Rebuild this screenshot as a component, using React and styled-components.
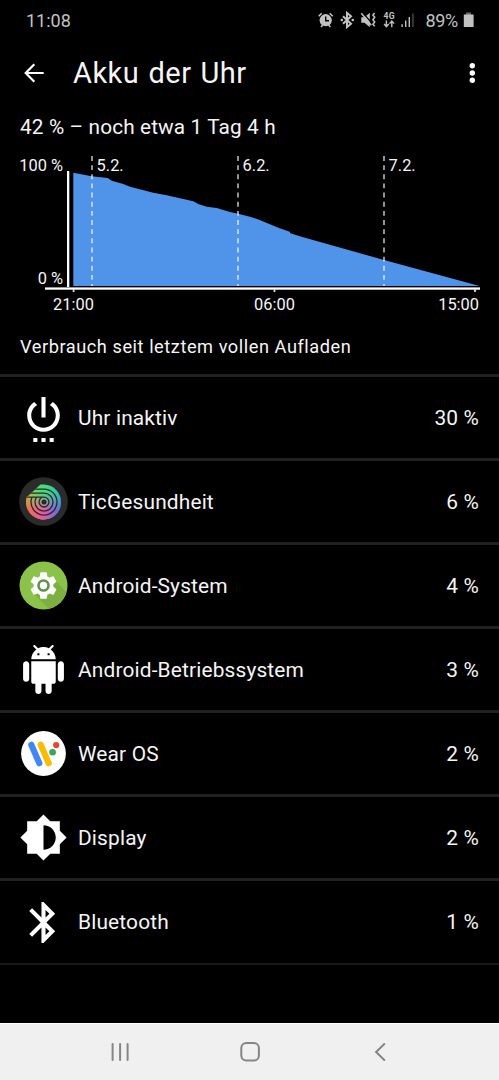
import React from 'react';
import styled, { createGlobalStyle } from 'styled-components';

const GlobalStyle = createGlobalStyle`
  * {
    box-sizing: border-box;
  }

  body {
    margin: 0;
    background: #000;
    font-family: Roboto, sans-serif;
  }
`;

const Screen = styled.div`
  width: 499px;
  height: 1080px;
  margin: 0 auto;
  display: flex;
  flex-direction: column;
  background: #000;
  color: #f5f5f5;
  overflow: hidden;
`;

const StatusBar = styled.div`
  height: 40px;
  padding: 0 24px 0 26px;
  display: flex;
  align-items: center;
  justify-content: space-between;
  color: #c2c2c2;
  font-size: 18px;
`;

const StatusIcons = styled.div`
  display: flex;
  align-items: center;

  svg {
    display: block;
  }
`;

const Percent = styled.span`
  margin-left: 10px;
  margin-right: 5px;
  letter-spacing: -0.3px;
`;

const Header = styled.header`
  height: 66px;
  padding: 0 15px 0 22px;
  display: flex;
  align-items: center;

  svg {
    display: block;
  }
`;

const Title = styled.h1`
  flex: 1;
  margin: 0 0 0 27px;
  font-size: 29px;
  font-weight: 400;
  letter-spacing: 0.5px;
  word-spacing: 1.4px;
`;

const Summary = styled.div`
  height: 42px;
  padding: 0 20px;
  line-height: 42px;
  font-size: 20.8px;
  letter-spacing: 0.12px;
`;

const Chart = styled.svg`
  display: block;
  flex: none;

  text {
    fill: #f5f5f5;
    font-size: 16.4px;
  }
`;

const Caption = styled.div`
  height: 58px;
  padding: 0 20px;
  line-height: 61px;
  font-size: 18.2px;
  letter-spacing: 0.55px;
`;

const List = styled.div`
  border-top: 3px solid #212121;
`;

const Row = styled.div`
  height: 84px;
  padding: 0 20px 0 19px;
  display: flex;
  align-items: center;
  border-bottom: 3px solid #212121;
  font-size: 20.9px;
  letter-spacing: 0.15px;

  &:last-child {
    border-bottom: 2px solid #181818;
  }
`;

const RowIcon = styled.svg`
  display: block;
  width: 49px;
  height: 49px;
  margin-right: 10px;
  fill: #fff;
`;

const RowName = styled.span`
  flex: 1;
`;

const NavBar = styled.nav`
  height: 57px;
  margin-top: auto;
  border-top: 1px solid #fff;
  background: #f0f0f0;

  svg {
    display: block;
  }
`;

const levels = [
  [73.3, 172.7], [91.7, 176.3], [107.7, 178], [111.7, 180.7], [123.3, 184],
  [130, 186.7], [153.3, 192.7], [166.7, 195.3], [193.3, 201.3], [198.3, 204],
  [206.7, 206.7], [216.7, 208], [230, 212], [238, 213.7], [250, 216.7],
  [259, 219.7], [279, 228], [289.7, 231.7], [290.3, 233.3], [302.3, 237],
  [384, 260], [479.5, 286],
];

const days = [
  { x: 92, label: '5.2.' },
  { x: 238, label: '6.2.' },
  { x: 384, label: '7.2.' },
];

function BatteryChart() {
  const area = levels.map(p => p.join(',')).join(' ');
  return (
    <Chart width="499" height="168" viewBox="0 148 499 168">
      <polygon points={`${area} 73.3,286`} fill="#5094ea" />
      {days.map(day => (
        <g key={day.label}>
          <line x1={day.x} x2={day.x} y1="156" y2="286" stroke="#fff" strokeOpacity="0.72" strokeWidth="1.6" strokeDasharray="4.9 4.25" />
          <text x={day.x + 4.6} y="171">{day.label}</text>
        </g>
      ))}
      <rect x="67" y="171" width="2.3" height="116" fill="#fff" />
      <rect x="45" y="287.4" width="435" height="2.3" fill="#fff" />
      <path d="M73.6 289v3M274.5 289v3M475 289v3" stroke="#ddd" strokeWidth="1.8" />
      <text x="63" y="171" textAnchor="end">100 %</text>
      <text x="63" y="284" textAnchor="end">0 %</text>
      <text x="73.5" y="310" textAnchor="middle">21:00</text>
      <text x="274.5" y="310" textAnchor="middle">06:00</text>
      <text x="479" y="310" textAnchor="end">15:00</text>
    </Chart>
  );
}

function StatusGlyphs() {
  return (
    <svg width="98" height="24" viewBox="318 8 98 24" fill="#c2c2c2">
      {/* alarm */}
      <circle cx="326.7" cy="20.2" r="6.1" />
      <path d="M326.7 16.5v4.3h3.3" fill="none" stroke="#000" strokeWidth="1.4" />
      <path d="M319.7 16.2l3-3M333.7 16.2l-3-3M322 27l1.8-2M331.4 27l-1.8-2" fill="none" stroke="#c2c2c2" strokeWidth="1.6" />
      {/* bluetooth connected */}
      <path d="M344 16.2l8 7.6-4 3.4V12.8l4 3.4-8 7.6" fill="none" stroke="#c2c2c2" strokeWidth="2" />
      <circle cx="342.8" cy="20" r="1.3" />
      <circle cx="353.8" cy="20" r="1.3" />
      {/* muted, vibrating speaker */}
      <path d="M362.3 17.3h3.2l5.3-4.5v14.4l-5.3-4.5h-3.2z" />
      <path d="M363.6 12.6l9.5 10.8" stroke="#000" strokeWidth="1.4" />
      <path d="M362.3 13.2l10 12" stroke="#c2c2c2" strokeWidth="1.5" />
      <path d="M375.7 13l-1.8 2 1.8 2.3-1.8 2.4 1.8 2.3-1.8 2.3 1.8 2" fill="none" stroke="#c2c2c2" strokeWidth="1.5" />
      {/* mobile data */}
      <text x="384.5" y="19" fontSize="8.6" fontWeight="700" textLength="11">4G</text>
      <path d="M387.4 20.5v6M385.1 24l2.3 2.6 2.3-2.6M392.8 27.2v-6M390.5 23.6l2.3-2.6 2.3 2.6" fill="none" stroke="#c2c2c2" strokeWidth="1.4" />
      {/* signal */}
      <path d="M402.4 24.3h1.4v2.7h-1.4zM406 20.6h1.4V27H406zM409.6 17h1.4v10h-1.4z" />
      <path d="M413.2 13.4h1.4V27h-1.4z" fill="#4a4a4a" />
    </svg>
  );
}

const gear = 'M19.43 12.98c.04-.32.07-.64.07-.98s-.03-.66-.07-.98l2.11-1.65c.19-.15.24-.42.12-.64l-2-3.46c-.12-.22-.39-.3-.61-.22l-2.49 1c-.52-.4-1.08-.73-1.69-.98l-.38-2.65C14.46 2.18 14.25 2 14 2h-4c-.25 0-.46.18-.49.42l-.38 2.65c-.61.25-1.17.59-1.69.98l-2.49-1c-.23-.09-.49 0-.61.22l-2 3.46c-.13.22-.07.49.12.64l2.11 1.65c-.04.32-.07.65-.07.98s.03.66.07.98l-2.11 1.65c-.19.15-.24.42-.12.64l2 3.46c.12.22.39.3.61.22l2.49-1c.52.4 1.08.73 1.69.98l.38 2.65c.03.24.24.42.49.42h4c.25 0 .46-.18.49-.42l.38-2.65c.61-.25 1.17-.59 1.69-.98l2.49 1c.23.09.49 0 .61-.22l2-3.46c.12-.22.07-.49-.12-.64l-2.11-1.65z';

function HealthIcon() {
  return (
    <RowIcon viewBox="0 0 49 49">
      <defs>
        <linearGradient id="ringTop" x1="0" y1="0" x2="1" y2="0">
          <stop offset="0" stopColor="#b0c24a" />
          <stop offset="0.45" stopColor="#45e076" />
          <stop offset="1" stopColor="#2fc0b4" />
        </linearGradient>
        <linearGradient id="ringBottom" x1="0" y1="0" x2="1" y2="0">
          <stop offset="0" stopColor="#ff6a48" />
          <stop offset="0.5" stopColor="#e25aa4" />
          <stop offset="1" stopColor="#4470f5" />
        </linearGradient>
        <linearGradient id="ringFade" x1="0" y1="0" x2="0" y2="1">
          <stop offset="0.32" stopColor="#fff" stopOpacity="0" />
          <stop offset="0.68" stopColor="#fff" />
        </linearGradient>
        <mask id="ringMask">
          <rect width="49" height="49" fill="url(#ringFade)" />
        </mask>
        <clipPath id="ringClip">
          <path d="M21.5 7.5H25A17.5 17.5 0 1 1 7.2 22.5L7.6 20.2z" />
        </clipPath>
      </defs>
      <circle cx="24.5" cy="24.5" r="24.3" fill="#2b2b2c" />
      <g clipPath="url(#ringClip)">
        <rect x="7" y="7" width="36" height="36" fill="url(#ringTop)" />
        <g mask="url(#ringMask)">
          <rect x="7" y="7" width="36" height="36" fill="url(#ringBottom)" />
        </g>
        <g fill="none" stroke="#29292b" strokeWidth="1.3">
          <path d="M13 12.1H25A13 13 0 1 1 12 25.1Q12 22.5 13 20.2" />
          <path d="M8 16.1H25A9 9 0 1 1 16 25.1Q16 22.5 17.5 20.2" />
          <path d="M6 20.2H25A4.9 4.9 0 1 1 20.1 25.1Q20.1 22 22.5 20.2" />
        </g>
      </g>
      <circle cx="25" cy="25.1" r="2.5" fill="#29292b" />
    </RowIcon>
  );
}

function SystemIcon() {
  return (
    <RowIcon viewBox="0 0 49 49">
      <defs>
        <clipPath id="systemClip">
          <circle cx="24.5" cy="24.5" r="24" />
        </clipPath>
      </defs>
      <circle cx="24.5" cy="24.5" r="24" fill="#8bc34a" />
      <path d="M16 34L31 49H49V33L37 20z" fill="#7cb142" clipPath="url(#systemClip)" />
      <path d={gear} transform="translate(8.7 8.7) scale(1.32)" />
      <circle cx="24.5" cy="24.5" r="5" fill="#fff" stroke="#62914a" strokeWidth="2.6" />
    </RowIcon>
  );
}

function WearIcon() {
  return (
    <RowIcon viewBox="0 0 49 49">
      <circle cx="24.5" cy="24.5" r="22.4" />
      <g strokeWidth="6.2" strokeLinecap="round">
        <path d="M21.7 15.8L29.7 34.2" stroke="#fbbc04" />
        <path d="M12.3 15.8L20.3 34.2" stroke="#4285f4" />
      </g>
      <circle cx="33.6" cy="23.2" r="3.3" fill="#34a853" />
      <circle cx="37.2" cy="16.1" r="3.1" fill="#ea4335" />
    </RowIcon>
  );
}

const paths = {
  power: 'M7 24h2v-2H7v2zm4 0h2v-2h-2v2zm2-22h-2v10h2V2zm3.56 2.44l-1.45 1.45C16.84 6.94 18 8.83 18 11c0 3.31-2.69 6-6 6s-6-2.69-6-6c0-2.17 1.16-4.06 2.88-5.12L7.44 4.44C5.36 5.88 4 8.28 4 11c0 4.42 3.58 8 8 8s8-3.58 8-8c0-2.72-1.36-5.12-3.44-6.56zM15 24h2v-2h-2v2z',
  android: 'M6 18c0 .55.45 1 1 1h1v3.5c0 .83.67 1.5 1.5 1.5s1.5-.67 1.5-1.5V19h2v3.5c0 .83.67 1.5 1.5 1.5s1.5-.67 1.5-1.5V19h1c.55 0 1-.45 1-1V8H6v10zM3.5 8C2.67 8 2 8.67 2 9.5v7c0 .83.67 1.5 1.5 1.5S5 17.33 5 16.5v-7C5 8.67 4.33 8 3.5 8zm17 0c-.83 0-1.5.67-1.5 1.5v7c0 .83.67 1.5 1.5 1.5s1.5-.67 1.5-1.5v-7c0-.83-.67-1.5-1.5-1.5zm-4.97-5.84l1.3-1.3c.2-.2.2-.51 0-.71-.2-.2-.51-.2-.71 0l-1.48 1.48C13.85 1.23 12.95 1 12 1c-.96 0-1.86.23-2.66.63L7.85.15c-.2-.2-.51-.2-.71 0-.2.2-.2.51 0 .71l1.31 1.31C6.97 3.26 6 5.01 6 7h12c0-1.99-.97-3.75-2.47-4.84zM10 5H9V4h1v1zm5 0h-1V4h1v1z',
  display: 'M20 15.31L23.31 12 20 8.69V4h-4.69L12 .69 8.69 4H4v4.69L.69 12 4 15.31V20h4.69L12 23.31 15.31 20H20v-4.69zM12 18V6c3.31 0 6 2.69 6 6s-2.69 6-6 6z',
  bluetooth: 'M17.71 7.71L12 2h-1v7.59L6.41 5 5 6.41 10.59 12 5 17.59 6.41 19 11 14.41V22h1l5.71-5.71-4.3-4.29 4.3-4.29zM13 5.83l1.88 1.88L13 9.59V5.83zm1.88 10.46L13 18.17v-3.76l1.88 1.88z',
};

function Glyph({ name }) {
  return (
    <RowIcon viewBox="0 0 24 24">
      <path d={paths[name]} />
    </RowIcon>
  );
}

const usage = [
  { name: 'Uhr inaktiv', value: 30, icon: <Glyph name="power" /> },
  { name: 'TicGesundheit', value: 6, icon: <HealthIcon /> },
  { name: 'Android-System', value: 4, icon: <SystemIcon /> },
  { name: 'Android-Betriebssystem', value: 3, icon: <Glyph name="android" /> },
  { name: 'Wear OS', value: 2, icon: <WearIcon /> },
  { name: 'Display', value: 2, icon: <Glyph name="display" /> },
  { name: 'Bluetooth', value: 1, icon: <Glyph name="bluetooth" /> },
];

function App() {
  return (
    <>
      <GlobalStyle />
      <Screen>
        <StatusBar>
          <span>11:08</span>
          <StatusIcons>
            <StatusGlyphs />
            <Percent>89%</Percent>
            <svg width="12" height="16" viewBox="0 0 12 16">
              <path d="M3 0.5h5V3H3z" fill="#666" />
              <path d="M0.8 2.5h9.8V15H0.8z" fill="#c2c2c2" />
            </svg>
          </StatusIcons>
        </StatusBar>
        <Header>
          <svg width="24" height="24" viewBox="0 0 24 24" fill="none" stroke="#fff" strokeWidth="2.2">
            <path d="M21.7 12H4M12.3 3.3L3.7 12l8.6 8.7" />
          </svg>
          <Title>Akku der Uhr</Title>
          <svg width="24" height="24" viewBox="0 0 24 24" fill="#fff">
            <circle cx="12.3" cy="4.8" r="2.7" />
            <circle cx="12.3" cy="12" r="2.7" />
            <circle cx="12.3" cy="19.3" r="2.7" />
          </svg>
        </Header>
        <Summary>42 % – noch etwa 1 Tag 4 h</Summary>
        <BatteryChart />
        <Caption>Verbrauch seit letztem vollen Aufladen</Caption>
        <List>
          {usage.map(item => (
            <Row key={item.name}>
              {item.icon}
              <RowName>{item.name}</RowName>
              <span>{item.value} %</span>
            </Row>
          ))}
        </List>
        <NavBar>
          <svg width="499" height="56" viewBox="0 1024 499 56" fill="none" stroke="#858585" strokeWidth="2" strokeLinecap="round">
            <path d="M112.6 1044v16M120.1 1044v16M127.6 1044v16" />
            <rect x="241.3" y="1043" width="17.6" height="17.6" rx="5" />
            <path d="M384.3 1044l-8.2 8 8.2 8" />
          </svg>
        </NavBar>
      </Screen>
    </>
  );
}

export default App;
